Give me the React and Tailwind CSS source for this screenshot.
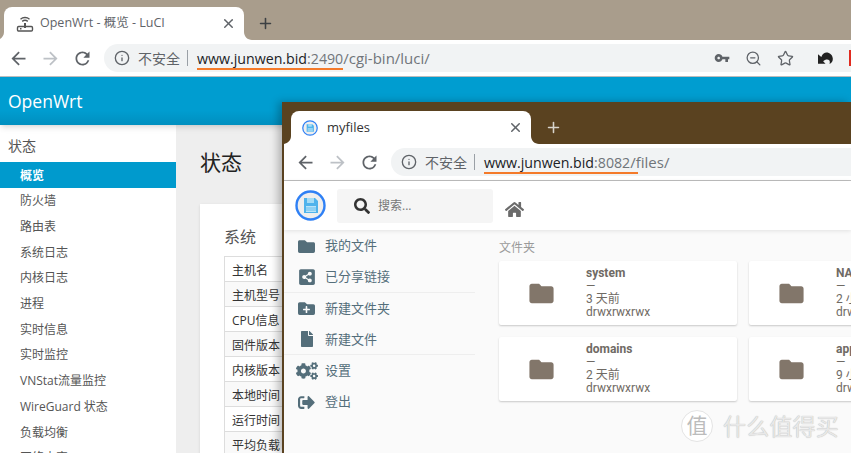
import React from "react";
import { Info, ZoomOut, Star, X, Plus } from "lucide-react";
import { FaFolder, FaShareAltSquare, FaFolderPlus, FaFile, FaCogs, FaSignOutAlt, FaHome, FaSearch } from "react-icons/fa";
import { MdFolder } from "react-icons/md";

const cjk = { fontFamily: '"Open Sans","Noto Sans CJK SC",sans-serif' };
const roboto = { fontFamily: 'Roboto,"Noto Sans CJK SC",sans-serif' };

const Back = () => (
  <svg width="21" height="21" viewBox="0 0 24 24" fill="#5f6368"><path d="M20 11H7.83l5.59-5.59L12 4l-8 8 8 8 1.41-1.41L7.83 13H20v-2z" /></svg>
);
const Fwd = () => (
  <svg width="21" height="21" viewBox="0 0 24 24" fill="#bdc1c6"><path d="M4 11h12.17l-5.59-5.59L12 4l8 8-8 8-1.41-1.41L16.17 13H4v-2z" /></svg>
);
const Reload = () => (
  <svg width="21" height="21" viewBox="0 0 24 24" fill="#5f6368"><path d="M17.65 6.35A7.958 7.958 0 0 0 12 4c-4.42 0-7.99 3.58-7.99 8s3.57 8 7.99 8c3.73 0 6.84-2.55 7.73-6h-2.08A5.99 5.99 0 0 1 12 18c-3.31 0-6-2.69-6-6s2.69-6 6-6c1.66 0 3.14.69 4.22 1.78L13 11h7V4l-2.35 2.35z" /></svg>
);
const Key = () => (
  <svg width="16" height="16" viewBox="0 0 24 24" fill="#5f6368"><path d="M12.65 10C11.83 7.67 9.61 6 7 6c-3.31 0-6 2.69-6 6s2.69 6 6 6c2.61 0 4.83-1.67 5.65-4H17v4h4v-4h2v-4H12.65zM7 14c-1.1 0-2-.9-2-2s.9-2 2-2 2 .9 2 2-.9 2-2 2z" /></svg>
);
const Router = () => (
  <svg width="18" height="18" viewBox="0 0 18 18" fill="none" stroke="#555" strokeWidth="1.4">
    <path d="M4.5 4.2C7 2 11 2 13.5 4.2" />
    <path d="M6.2 6.4C7.8 5 10.2 5 11.8 6.4" />
    <path d="M9 8v5" strokeWidth="2" />
    <rect x="1.5" y="11.5" width="15" height="4.5" rx="1.2" />
    <path d="M4 13.8h1.5" />
  </svg>
);
const Logo = ({ size = 31 }) => (
  <svg width={size} height={size} viewBox="0 0 31 31">
    <circle cx="15.5" cy="15.5" r="14" fill="#eeeeee" stroke="#2f80f5" strokeWidth="2.4" />
    <path d="M9 8h11l3 3v12H9z" fill="#4fb3ec" />
    <rect x="12" y="8" width="7" height="5" fill="#a5dcf6" />
    <rect x="11" y="16" width="10" height="6" fill="#b9e4f8" />
    <path d="M11 18h10M11 20h10" stroke="#4fb3ec" strokeWidth="0.8" />
  </svg>
);

function Toolbar({ port, path, padClass, lineClass }) {
  return (
    <div className="flex h-[36px] items-center bg-white" style={cjk}>
      <div className={"flex shrink-0 items-center gap-[11px] " + padClass}>
        <Back />
        <Fwd />
        <Reload />
      </div>
      <div className="flex h-[28px] min-w-0 flex-1 items-center rounded-l-[14px] bg-[#f1f3f4] pl-[10px]">
        <Info size={16} color="#5f6368" strokeWidth={2} className="shrink-0" />
        <span className="ml-[8px] shrink-0 text-[14px] text-[#5f6368]">不安全</span>
        <span className="ml-[7px] h-[16px] w-px shrink-0 bg-[#9aa0a6]" />
        <div className="ml-[9px] whitespace-nowrap text-[15px] text-[#70757a]">
          <span className={"inline-block border-b-2 border-[#f47a2a] text-[14.2px] leading-[19px] " + lineClass}>
            <span className="text-[#202124]">www.junwen.bid</span>:{port}
          </span>
          {path}
        </div>
      </div>
    </div>
  );
}

const Foot = ({ side, fill = "#fff" }) => (
  <svg
    width="8"
    height="8"
    viewBox="0 0 8 8"
    className={"absolute bottom-0 " + (side === "l" ? "left-[-8px]" : "right-[-8px]")}
  >
    <path d={side === "l" ? "M8 0v8H0c4.4 0 8-3.6 8-8z" : "M0 0v8h8C3.6 8 0 4.4 0 0z"} fill={fill} />
  </svg>
);

function Tab({ icon, title, titleClass, className }) {
  return (
    <div className={"relative flex h-[33px] items-center rounded-t-[8px] bg-white " + className}>
      <Foot side="l" />
      {icon}
      <span className={titleClass}>{title}</span>
      <X size={15} color="#5f6368" strokeWidth={2.4} className="ml-auto mr-[8px]" />
      <Foot side="r" />
    </div>
  );
}

const navItems = ["防火墙", "路由表", "系统日志", "内核日志", "进程", "实时信息", "实时监控", "VNStat流量监控", "WireGuard 状态", "负载均衡", "网络内容"];
const tableRows = ["主机名", "主机型号", "CPU信息", "固件版本", "内核版本", "本地时间", "运行时间", "平均负载"];

function Luci() {
  return (
    <div className="flex min-h-0 flex-1 flex-col" style={cjk}>
      <div className="z-10 flex h-[48px] shrink-0 items-center bg-gradient-to-b from-[#009dd0] from-70% to-[#008fbf] pl-[8px] text-[17.5px] text-white shadow-md">
        OpenWrt
      </div>
      <div className="flex min-h-0 flex-1">
        <div className="w-[176px] shrink-0 overflow-hidden bg-white">
          <div className="flex h-[37px] items-center pl-[8px] pt-[4px] text-[14px] text-[#555]">状态</div>
          <div className="flex h-[26px] items-center bg-[#009acd] pl-[20px] pt-[1px] text-[12px] font-bold text-white">概览</div>
          {navItems.map((n) => (
            <div key={n} className="flex h-[25.7px] items-center pl-[20px] pt-[1px] text-[12px] text-[#555]">{n}</div>
          ))}
        </div>
        <div className="min-w-0 flex-1 overflow-hidden bg-[#eeeeee] pl-[24px] pt-[24px]">
          <div className="text-[21px] leading-[26px] text-[#222]">状态</div>
          <div className="mt-[29px] bg-white pl-[24px] pt-[22px] shadow-sm">
            <div className="text-[16px] leading-[22px] text-[#555]">系统</div>
            <div className="mt-[8px] border-t border-l border-[#ddd]">
              {tableRows.map((r, i) => (
                <div key={r} className={"flex h-[25px] items-center border-b border-[#ddd] pl-[7px] pt-[3px] text-[12px] text-[#333] " + (i % 2 ? "bg-[#f9f9f9]" : "bg-white")}>{r}</div>
              ))}
            </div>
          </div>
        </div>
      </div>
    </div>
  );
}

const side = [
  { cls: "h-[63px] border-b border-[#eeeeee]", rows: [[<FaFolder key="a" size={17} />, "我的文件"], [<FaShareAltSquare key="b" size={18} />, "已分享链接"]] },
  { cls: "h-[62px] border-b border-[#eeeeee]", rows: [[<FaFolderPlus key="c" size={17} />, "新建文件夹"], [<FaFile key="d" size={16} />, "新建文件"]] },
  { cls: "h-[62px]", rows: [[<FaCogs key="e" size={22} />, "设置"], [<FaSignOutAlt key="f" size={17} />, "登出"]] },
];

const cards = [
  ["system", "3 天前"],
  ["NAS", "2 小时前"],
  ["domains", "2 天前"],
  ["apps", "9 小时前"],
];

function Card({ name, time }) {
  return (
    <div className="flex h-[64px] overflow-hidden rounded-[2px] bg-white shadow-[0_1px_2px_rgba(0,0,0,0.2)]" style={roboto}>
      <div className="flex w-[84px] shrink-0 items-center justify-center">
        <MdFolder size={29} color="#82766a" />
      </div>
      <div className="ml-[3px] whitespace-nowrap pt-[6px] text-[12px] leading-[13px] text-[#6f6a64]">
        <div className="font-bold">{name}</div>
        <div>—</div>
        <div>{time}</div>
        <div>drwxrwxrwx</div>
      </div>
    </div>
  );
}

function MyFiles() {
  return (
    <div className="absolute bottom-0 left-[282px] right-0 top-[102px] z-20 flex flex-col overflow-hidden border-l-2 border-[#5a4220] shadow-[-4px_0_8px_rgba(0,0,0,0.25)]">
      <div className="flex h-[42px] shrink-0 items-end bg-[#5a4220] pl-[7px]">
        <Tab
          className="w-[240px] pl-[11px]"
          icon={<Logo size={16} />}
          title="myfiles"
          titleClass="ml-[9px] pt-[1px] text-[13px] text-[#333] [font-family:'Open_Sans',sans-serif]"
        />
        <Plus size={17} color="#d8d4cc" strokeWidth={2.2} className="mb-[8px] ml-[14px]" />
      </div>
      <Toolbar port="8082" path="/files/" padClass="pl-[10.5px] pr-[11.5px]" lineClass="-mr-[8px] pr-[8px]" />
      <div className="h-px shrink-0 bg-[#bdbdbd]" />
      <div className="z-10 flex h-[49px] shrink-0 items-center bg-white pl-[11px] shadow-[0_1px_4px_rgba(0,0,0,0.1)]">
        <Logo />
        <div className="ml-[11px] flex h-[34px] w-[156px] items-center rounded-[3px] bg-[#f5f5f5] pl-[17px]" style={cjk}>
          <FaSearch size={16} color="#333" />
          <span className="ml-[8px] text-[12px] text-[#777]">搜索...</span>
        </div>
        <FaHome size={19} color="#6b6b6b" className="ml-[12px] mt-[8px]" />
      </div>
      <div className="flex min-h-0 flex-1 bg-[#fafafa]">
        <div className="w-[191px] shrink-0" style={cjk}>
          {side.map((g, i) => (
            <div key={i} className={"flex flex-col " + g.cls}>
              {g.rows.map(([ic, t]) => (
                <div key={t} className="flex flex-1 items-center pt-[1px] text-[13px] text-[#546e7a]">
                  <span className="flex w-[41px] shrink-0 justify-center pl-[4px]">{ic}</span>
                  <span>{t}</span>
                </div>
              ))}
            </div>
          ))}
        </div>
        <div className="min-w-0 flex-1 overflow-hidden pl-[24px] pt-[10px]">
          <div className="text-[12px] leading-[16px] text-[#9a9a9a]" style={cjk}>文件夹</div>
          <div className="mt-[5px] grid w-[488px] grid-cols-2 gap-[12px]">
            {cards.map(([n, t]) => (
              <Card key={n} name={n} time={t} />
            ))}
          </div>
        </div>
      </div>
    </div>
  );
}

export default function App() {
  return (
    <div className="relative h-[453px] w-[851px] overflow-hidden bg-white">
      <div className="flex h-full flex-col">
        <div className="flex h-[40px] shrink-0 items-end bg-[#a99d8c] pl-[4px]">
          <Tab
            className="w-[240px] pl-[12px]"
            icon={<Router />}
            title="OpenWrt - 概览 - LuCI"
            titleClass="ml-[6px] text-[12.5px] text-[#5f6368] [font-family:'Open_Sans','Noto_Sans_CJK_SC',sans-serif]"
          />
          <Plus size={17} color="#3c4043" strokeWidth={2.2} className="mb-[8px] ml-[13px]" />
        </div>
        <div className="flex shrink-0">
          <div className="min-w-0 flex-1">
            <Toolbar port="2490" path="/cgi-bin/luci/" padClass="pl-[7.5px] pr-[11.5px]" lineClass="" />
          </div>
        </div>
        <div className="h-px shrink-0 bg-[#bdbdbd]" />
        <Luci />
      </div>
      <div className="absolute right-0 top-[40px] flex h-[36px] items-center">
        <div className="flex h-[28px] w-[104px] items-center justify-end gap-[15px] rounded-r-[14px] bg-[#f1f3f4] pr-[10px]">
          <Key />
          <ZoomOut size={17} color="#5f6368" strokeWidth={1.8} />
          <Star size={17} color="#5f6368" strokeWidth={1.8} />
        </div>
        <div className="flex w-[47px] items-center justify-start pl-[14px]">
          <svg width="16" height="14" viewBox="0 0 16 14" fill="#222"><path d="M0 3v10h8L5.5 10.5C7.5 8.5 10.5 8 12 9.5c.7.8.8 2 .3 4 2.5-1.2 3.7-3.5 3.5-6C15.5 3.5 12.5 1 9 1 7 1 5 2 3.5 5.8z" /></svg>
          <span className="ml-[16px] h-[16px] w-[2px] shrink-0 bg-[#e02b20]" />
        </div>
      </div>
      <MyFiles />
      <div className="absolute left-[681px] top-[410px] z-30 flex items-center" style={cjk}>
        <div className="flex h-[32px] w-[32px] items-center justify-center rounded-full border border-[#e4e4e4] bg-white text-[21px] text-[#bcbcbc]">值</div>
        <span className="ml-[10px] text-[23px] leading-[32px] tracking-[0.2px] text-[#e8e8e8] [text-shadow:0_0_1px_#a8a8a8]">什么值得买</span>
      </div>
    </div>
  );
}
